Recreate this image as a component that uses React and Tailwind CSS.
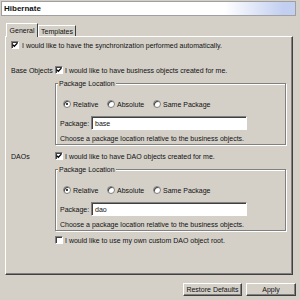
import React from "react";

// 체크박스
function Check({ checked }) {
  return (
    <span className="w-[8px] h-[8px] shrink-0 bg-white border border-t-[#808080] border-l-[#808080] border-r-white border-b-white shadow-[inset_1px_1px_0_#404040] flex items-center justify-center">
      {checked && (
        <svg width="6" height="6" viewBox="0 0 6 6">
          <path d="M0.6 2.6 L2.3 4.3 L5.4 1.1" stroke="black" strokeWidth="1.3" fill="none" />
        </svg>
      )}
    </span>
  );
}

// 라디오 버튼
function Radio({ selected, label, width }) {
  return (
    <div className={`flex items-center gap-[2px] ${width}`}>
      <span className="w-[8px] h-[8px] shrink-0 rounded-full bg-white border border-[#808080] shadow-[inset_1px_1px_0_#404040] flex items-center justify-center">
        {selected && <span className="w-[2px] h-[2px] rounded-full bg-black" />}
      </span>
      <span>{label}</span>
    </div>
  );
}

// 패키지 위치 그룹
function PackageGroup({ value }) {
  return (
    <div className="relative ml-[49px] mt-[7px] w-[231px] h-[62px] border border-[#808080] shadow-[1px_1px_0_white,inset_1px_1px_0_white]">
      <span className="absolute left-[2px] top-[-4px] px-[1px] bg-[#d4d0c8] leading-[7px]">Package Location</span>
      <div className="flex items-center h-[12px] mt-[14px] pl-[7px]">
        <Radio selected label="Relative" width="w-[44px]" />
        <Radio label="Absolute" width="w-[46px]" />
        <Radio label="Same Package" width="" />
      </div>
      <div className="flex items-center h-[14px] mt-[6px] pl-[4px]">
        <span className="w-[31px]">Package:</span>
        <div className="w-[156px] h-[14px] bg-white border border-t-[#808080] border-l-[#808080] border-r-white border-b-white shadow-[inset_1px_1px_0_#404040] flex items-center pl-[3px]">
          {value}
        </div>
      </div>
      <div className="flex items-center h-[10px] mt-[3px] pl-[4px]">
        Choose a package location relative to the business objects.
      </div>
    </div>
  );
}

export default function App() {
  return (
    <div className="w-[300px] h-[300px] bg-[#d4d0c8] font-['Liberation_Sans',Arial,sans-serif] text-[7px] leading-none text-[#111] overflow-hidden">
      {/* 제목 */}
      <div className="ml-[1px] mt-[1px] w-[295px] h-[15px] border border-[#a0a0a0] bg-[linear-gradient(to_right,#ffffff_76%,#c2cff0_96%)] flex items-center pl-[2px]">
        <span className="font-bold text-[8px]">Hibernate</span>
      </div>

      {/* 탭 */}
      <div className="flex items-start h-[13px] mt-[7px] pl-[6px]">
        <div className="relative z-10 w-[32px] h-[14px] bg-[#d4d0c8] border-t border-l border-white border-r border-r-[#404040] flex items-center justify-center">
          General
        </div>
        <div className="mt-[2px] w-[38px] h-[11px] border-t border-l border-white border-r border-r-[#404040] flex items-center justify-center">
          Templates
        </div>
      </div>

      {/* 패널 */}
      <div className="ml-[5px] w-[288px] h-[239px] border border-t-white border-l-white border-r-[#404040] border-b-[#404040] shadow-[inset_-1px_-1px_0_#808080]">
        <div className="flex items-center gap-[3px] h-[12px] mt-[2px] pl-[5px]">
          <Check checked />
          <span>I would like to have the synchronization performed automatically.</span>
        </div>

        <div className="flex items-center h-[12px] mt-[13px] pl-[5px]">
          <span className="w-[44px]">Base Objects</span>
          <Check checked />
          <span className="ml-[2px]">I would like to have business objects created for me.</span>
        </div>
        <PackageGroup value="base" />

        <div className="flex items-center h-[12px] mt-[5px] pl-[5px]">
          <span className="w-[44px]">DAOs</span>
          <Check checked />
          <span className="ml-[2px]">I would like to have DAO objects created for me.</span>
        </div>
        <PackageGroup value="dao" />

        <div className="flex items-center h-[12px] mt-[3px] pl-[49px]">
          <Check />
          <span className="ml-[2px]">I would like to use my own custom DAO object root.</span>
        </div>
      </div>

      {/* 버튼 */}
      <div className="flex justify-end gap-[4px] mt-[8px] pr-[4px]">
        <button className="w-[59px] h-[13px] border border-t-white border-l-white border-r-[#404040] border-b-[#404040] shadow-[inset_-1px_-1px_0_#808080] flex items-center justify-center">
          Restore Defaults
        </button>
        <button className="w-[50px] h-[13px] border border-t-white border-l-white border-r-[#404040] border-b-[#404040] shadow-[inset_-1px_-1px_0_#808080] flex items-center justify-center">
          Apply
        </button>
      </div>
    </div>
  );
}
